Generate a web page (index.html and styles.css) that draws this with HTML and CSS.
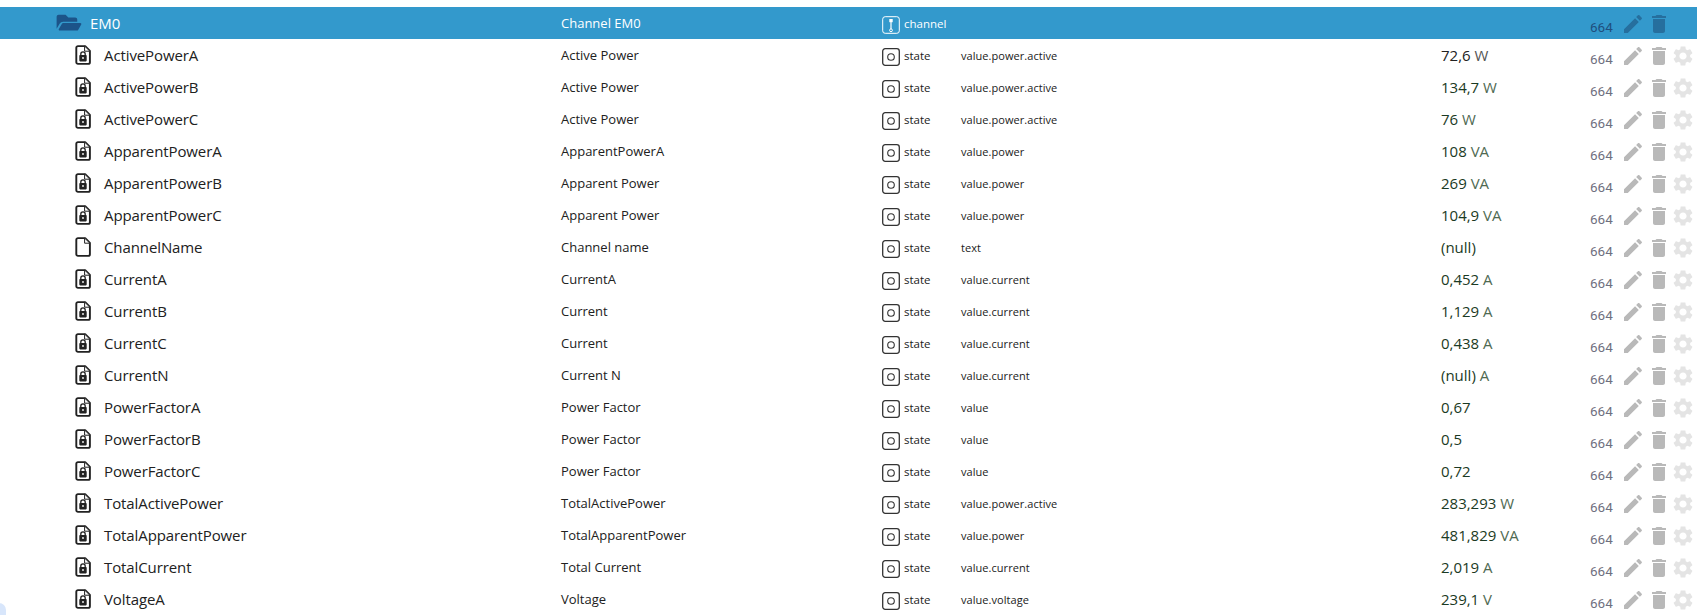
FILE: index.html
```html
<!DOCTYPE html>
<html lang="en">
<head>
  <meta charset="UTF-8">
  <title>Objects</title>
  <link rel="stylesheet" href="styles.css">
</head>
<body>

  <svg class="defs" width="0" height="0">
    <symbol id="i-folder" viewBox="0 0 576 512"><path d="M572.700 292.100L500.300 416.200C494.600 426 484.100 432 472.700 432H72c-18.500 0-30.100-20.100-20.700-36.100l72.400-124.100c5.700-9.800 16.200-15.800 27.600-15.800h400.700c18.500 0 30.100 20.100 20.700 36.100zM152 224h328v-48c0-26.500-21.500-48-48-48H272l-64-64H48C21.500 64 0 85.500 0 112v278l69.100-118.400C86.200 242.300 118 224 152 224z"/></symbol>
    <symbol id="i-file" viewBox="0 0 16 20"><path d="M3 1.100h7.200L14.900 6v11.200a1.700 1.700 0 0 1-1.700 1.700H3a1.700 1.700 0 0 1-1.700-1.700V2.800A1.700 1.700 0 0 1 3 1.100z" fill="#fff" stroke="#222" stroke-width="1.900" stroke-linejoin="round"/><path d="M9.600 1.100v5.100h5.300z" fill="#fff" stroke="#222" stroke-width="1"/></symbol>
    <symbol id="i-lockfile" viewBox="0 0 16 20"><path d="M3 1.100h7.200L14.900 6v11.200a1.700 1.700 0 0 1-1.700 1.700H3a1.700 1.700 0 0 1-1.700-1.700V2.800A1.700 1.700 0 0 1 3 1.100z" fill="#fff" stroke="#222" stroke-width="1.900" stroke-linejoin="round"/><path d="M9.600 1.100v5.100h5.300z" fill="#fff" stroke="#222" stroke-width="1"/><rect x="4.300" y="10" width="7.400" height="6.400" rx=".8" fill="#222"/><path d="M5.800 10.500V9a2.200 2.200 0 0 1 4.400 0v1.500" fill="none" stroke="#222" stroke-width="1.300"/><circle cx="8" cy="13" r=".9" fill="#fff"/></symbol>
    <symbol id="i-state" viewBox="0 0 18 18"><rect x=".7" y=".7" width="16.600" height="16.600" rx="2.500" fill="none" stroke="currentColor" stroke-width="1.300"/><circle cx="9" cy="9" r="3.300" fill="none" stroke="currentColor" stroke-width="1.100"/></symbol>
    <symbol id="i-channel" viewBox="0 0 18 18"><rect x=".7" y=".7" width="16.600" height="16.600" rx="2.500" fill="none" stroke="currentColor" stroke-width="1"/><rect x="7.300" y="3" width="3.400" height="3.200" fill="currentColor"/><path d="M9 6v7" stroke="currentColor" stroke-width="1.200"/><circle cx="9" cy="14.300" r="1.400" fill="none" stroke="currentColor"/></symbol>
    <symbol id="i-edit" viewBox="0 0 24 24"><path d="M3 17.250V21h3.750L17.810 9.940l-3.750-3.750L3 17.250zM20.710 7.040c.39-.39.39-1.020 0-1.410l-2.340-2.340c-.39-.39-1.020-.39-1.410 0l-1.830 1.830 3.750 3.750 1.830-1.830z"/></symbol>
    <symbol id="i-trash" viewBox="0 0 24 24"><path d="M6 19c0 1.100.9 2 2 2h8c1.100 0 2-.9 2-2V7H6v12zM19 4h-3.500l-1-1h-5l-1 1H5v2h14V4z"/></symbol>
    <symbol id="i-gear" viewBox="0 0 24 24"><path d="M19.140 12.940c.04-.3.06-.61.06-.94 0-.32-.02-.64-.07-.94l2.030-1.580c.18-.14.23-.41.12-.61l-1.920-3.320c-.12-.22-.37-.29-.59-.22l-2.390.96c-.5-.38-1.030-.7-1.620-.94l-.36-2.540c-.04-.24-.24-.41-.48-.41h-3.840c-.24 0-.43.17-.47.41l-.36 2.540c-.59.24-1.130.57-1.620.94l-2.390-.96c-.22-.08-.47 0-.59.22L2.740 8.870c-.12.21-.08.47.12.61l2.030 1.580c-.05.3-.09.63-.09.94s.02.64.07.94l-2.030 1.580c-.18.14-.23.41-.12.61l1.920 3.320c.12.22.37.29.59.22l2.390-.96c.5.38 1.030.7 1.620.94l.36 2.540c.05.24.24.41.48.41h3.840c.24 0 .44-.17.47-.41l.36-2.540c.59-.24 1.130-.56 1.620-.94l2.390.96c.22.08.47 0 .59-.22l1.920-3.320c.12-.22.07-.47-.12-.61l-2.010-1.580zM12 15.600c-1.980 0-3.600-1.620-3.600-3.600s1.620-3.600 3.600-3.600 3.600 1.620 3.600 3.600-1.620 3.600-3.600 3.600z"/></symbol>
  </svg>

  <div class="tree">

    <div class="row row-cut">
      <span class="col-icon"></span><span class="col-name"></span><span class="col-title"></span>
      <span class="col-type"><svg class="type-icon"><use href="#i-state"/></svg></span>
      <span class="col-role"></span><span class="col-value"></span><span class="col-acl"></span>
      <span class="col-actions"><svg class="act act-edit"><use href="#i-edit"/></svg><svg class="act act-trash"><use href="#i-trash"/></svg><svg class="act act-gear"><use href="#i-gear"/></svg></span>
    </div>

    <div class="row row-channel">
      <span class="col-icon"><svg class="folder-icon"><use href="#i-folder"/></svg></span>
      <span class="col-name">EM0</span><span class="col-title">Channel EM0</span>
      <span class="col-type"><svg class="type-icon"><use href="#i-channel"/></svg>channel</span>
      <span class="col-role"></span><span class="col-value"></span><span class="col-acl">664</span>
      <span class="col-actions"><svg class="act act-edit"><use href="#i-edit"/></svg><svg class="act act-trash"><use href="#i-trash"/></svg></span>
    </div>

    <div class="row">
      <span class="col-icon"><svg class="file-icon"><use href="#i-lockfile"/></svg></span>
      <span class="col-name">ActivePowerA</span><span class="col-title">Active Power</span>
      <span class="col-type"><svg class="type-icon"><use href="#i-state"/></svg>state</span>
      <span class="col-role">value.power.active</span><span class="col-value old">72,6 <i>W</i></span><span class="col-acl">664</span>
      <span class="col-actions"><svg class="act act-edit"><use href="#i-edit"/></svg><svg class="act act-trash"><use href="#i-trash"/></svg><svg class="act act-gear"><use href="#i-gear"/></svg></span>
    </div>
    <div class="row">
      <span class="col-icon"><svg class="file-icon"><use href="#i-lockfile"/></svg></span>
      <span class="col-name">ActivePowerB</span><span class="col-title">Active Power</span>
      <span class="col-type"><svg class="type-icon"><use href="#i-state"/></svg>state</span>
      <span class="col-role">value.power.active</span><span class="col-value">134,7 <i>W</i></span><span class="col-acl">664</span>
      <span class="col-actions"><svg class="act act-edit"><use href="#i-edit"/></svg><svg class="act act-trash"><use href="#i-trash"/></svg><svg class="act act-gear"><use href="#i-gear"/></svg></span>
    </div>
    <div class="row">
      <span class="col-icon"><svg class="file-icon"><use href="#i-lockfile"/></svg></span>
      <span class="col-name">ActivePowerC</span><span class="col-title">Active Power</span>
      <span class="col-type"><svg class="type-icon"><use href="#i-state"/></svg>state</span>
      <span class="col-role">value.power.active</span><span class="col-value">76 <i>W</i></span><span class="col-acl">664</span>
      <span class="col-actions"><svg class="act act-edit"><use href="#i-edit"/></svg><svg class="act act-trash"><use href="#i-trash"/></svg><svg class="act act-gear"><use href="#i-gear"/></svg></span>
    </div>
    <div class="row">
      <span class="col-icon"><svg class="file-icon"><use href="#i-lockfile"/></svg></span>
      <span class="col-name">ApparentPowerA</span><span class="col-title">ApparentPowerA</span>
      <span class="col-type"><svg class="type-icon"><use href="#i-state"/></svg>state</span>
      <span class="col-role">value.power</span><span class="col-value">108 <i>VA</i></span><span class="col-acl">664</span>
      <span class="col-actions"><svg class="act act-edit"><use href="#i-edit"/></svg><svg class="act act-trash"><use href="#i-trash"/></svg><svg class="act act-gear"><use href="#i-gear"/></svg></span>
    </div>
    <div class="row">
      <span class="col-icon"><svg class="file-icon"><use href="#i-lockfile"/></svg></span>
      <span class="col-name">ApparentPowerB</span><span class="col-title">Apparent Power</span>
      <span class="col-type"><svg class="type-icon"><use href="#i-state"/></svg>state</span>
      <span class="col-role">value.power</span><span class="col-value">269 <i>VA</i></span><span class="col-acl">664</span>
      <span class="col-actions"><svg class="act act-edit"><use href="#i-edit"/></svg><svg class="act act-trash"><use href="#i-trash"/></svg><svg class="act act-gear"><use href="#i-gear"/></svg></span>
    </div>
    <div class="row">
      <span class="col-icon"><svg class="file-icon"><use href="#i-lockfile"/></svg></span>
      <span class="col-name">ApparentPowerC</span><span class="col-title">Apparent Power</span>
      <span class="col-type"><svg class="type-icon"><use href="#i-state"/></svg>state</span>
      <span class="col-role">value.power</span><span class="col-value">104,9 <i>VA</i></span><span class="col-acl">664</span>
      <span class="col-actions"><svg class="act act-edit"><use href="#i-edit"/></svg><svg class="act act-trash"><use href="#i-trash"/></svg><svg class="act act-gear"><use href="#i-gear"/></svg></span>
    </div>
    <div class="row">
      <span class="col-icon"><svg class="file-icon"><use href="#i-file"/></svg></span>
      <span class="col-name">ChannelName</span><span class="col-title">Channel name</span>
      <span class="col-type"><svg class="type-icon"><use href="#i-state"/></svg>state</span>
      <span class="col-role">text</span><span class="col-value">(null)</span><span class="col-acl">664</span>
      <span class="col-actions"><svg class="act act-edit"><use href="#i-edit"/></svg><svg class="act act-trash"><use href="#i-trash"/></svg><svg class="act act-gear"><use href="#i-gear"/></svg></span>
    </div>
    <div class="row">
      <span class="col-icon"><svg class="file-icon"><use href="#i-lockfile"/></svg></span>
      <span class="col-name">CurrentA</span><span class="col-title">CurrentA</span>
      <span class="col-type"><svg class="type-icon"><use href="#i-state"/></svg>state</span>
      <span class="col-role">value.current</span><span class="col-value">0,452 <i>A</i></span><span class="col-acl">664</span>
      <span class="col-actions"><svg class="act act-edit"><use href="#i-edit"/></svg><svg class="act act-trash"><use href="#i-trash"/></svg><svg class="act act-gear"><use href="#i-gear"/></svg></span>
    </div>
    <div class="row">
      <span class="col-icon"><svg class="file-icon"><use href="#i-lockfile"/></svg></span>
      <span class="col-name">CurrentB</span><span class="col-title">Current</span>
      <span class="col-type"><svg class="type-icon"><use href="#i-state"/></svg>state</span>
      <span class="col-role">value.current</span><span class="col-value">1,129 <i>A</i></span><span class="col-acl">664</span>
      <span class="col-actions"><svg class="act act-edit"><use href="#i-edit"/></svg><svg class="act act-trash"><use href="#i-trash"/></svg><svg class="act act-gear"><use href="#i-gear"/></svg></span>
    </div>
    <div class="row">
      <span class="col-icon"><svg class="file-icon"><use href="#i-lockfile"/></svg></span>
      <span class="col-name">CurrentC</span><span class="col-title">Current</span>
      <span class="col-type"><svg class="type-icon"><use href="#i-state"/></svg>state</span>
      <span class="col-role">value.current</span><span class="col-value">0,438 <i>A</i></span><span class="col-acl">664</span>
      <span class="col-actions"><svg class="act act-edit"><use href="#i-edit"/></svg><svg class="act act-trash"><use href="#i-trash"/></svg><svg class="act act-gear"><use href="#i-gear"/></svg></span>
    </div>
    <div class="row">
      <span class="col-icon"><svg class="file-icon"><use href="#i-lockfile"/></svg></span>
      <span class="col-name">CurrentN</span><span class="col-title">Current N</span>
      <span class="col-type"><svg class="type-icon"><use href="#i-state"/></svg>state</span>
      <span class="col-role">value.current</span><span class="col-value">(null) <i>A</i></span><span class="col-acl">664</span>
      <span class="col-actions"><svg class="act act-edit"><use href="#i-edit"/></svg><svg class="act act-trash"><use href="#i-trash"/></svg><svg class="act act-gear"><use href="#i-gear"/></svg></span>
    </div>
    <div class="row">
      <span class="col-icon"><svg class="file-icon"><use href="#i-lockfile"/></svg></span>
      <span class="col-name">PowerFactorA</span><span class="col-title">Power Factor</span>
      <span class="col-type"><svg class="type-icon"><use href="#i-state"/></svg>state</span>
      <span class="col-role">value</span><span class="col-value">0,67</span><span class="col-acl">664</span>
      <span class="col-actions"><svg class="act act-edit"><use href="#i-edit"/></svg><svg class="act act-trash"><use href="#i-trash"/></svg><svg class="act act-gear"><use href="#i-gear"/></svg></span>
    </div>
    <div class="row">
      <span class="col-icon"><svg class="file-icon"><use href="#i-lockfile"/></svg></span>
      <span class="col-name">PowerFactorB</span><span class="col-title">Power Factor</span>
      <span class="col-type"><svg class="type-icon"><use href="#i-state"/></svg>state</span>
      <span class="col-role">value</span><span class="col-value">0,5</span><span class="col-acl">664</span>
      <span class="col-actions"><svg class="act act-edit"><use href="#i-edit"/></svg><svg class="act act-trash"><use href="#i-trash"/></svg><svg class="act act-gear"><use href="#i-gear"/></svg></span>
    </div>
    <div class="row">
      <span class="col-icon"><svg class="file-icon"><use href="#i-lockfile"/></svg></span>
      <span class="col-name">PowerFactorC</span><span class="col-title">Power Factor</span>
      <span class="col-type"><svg class="type-icon"><use href="#i-state"/></svg>state</span>
      <span class="col-role">value</span><span class="col-value">0,72</span><span class="col-acl">664</span>
      <span class="col-actions"><svg class="act act-edit"><use href="#i-edit"/></svg><svg class="act act-trash"><use href="#i-trash"/></svg><svg class="act act-gear"><use href="#i-gear"/></svg></span>
    </div>
    <div class="row">
      <span class="col-icon"><svg class="file-icon"><use href="#i-lockfile"/></svg></span>
      <span class="col-name">TotalActivePower</span><span class="col-title">TotalActivePower</span>
      <span class="col-type"><svg class="type-icon"><use href="#i-state"/></svg>state</span>
      <span class="col-role">value.power.active</span><span class="col-value">283,293 <i>W</i></span><span class="col-acl">664</span>
      <span class="col-actions"><svg class="act act-edit"><use href="#i-edit"/></svg><svg class="act act-trash"><use href="#i-trash"/></svg><svg class="act act-gear"><use href="#i-gear"/></svg></span>
    </div>
    <div class="row">
      <span class="col-icon"><svg class="file-icon"><use href="#i-lockfile"/></svg></span>
      <span class="col-name">TotalApparentPower</span><span class="col-title">TotalApparentPower</span>
      <span class="col-type"><svg class="type-icon"><use href="#i-state"/></svg>state</span>
      <span class="col-role">value.power</span><span class="col-value">481,829 <i>VA</i></span><span class="col-acl">664</span>
      <span class="col-actions"><svg class="act act-edit"><use href="#i-edit"/></svg><svg class="act act-trash"><use href="#i-trash"/></svg><svg class="act act-gear"><use href="#i-gear"/></svg></span>
    </div>
    <div class="row">
      <span class="col-icon"><svg class="file-icon"><use href="#i-lockfile"/></svg></span>
      <span class="col-name">TotalCurrent</span><span class="col-title">Total Current</span>
      <span class="col-type"><svg class="type-icon"><use href="#i-state"/></svg>state</span>
      <span class="col-role">value.current</span><span class="col-value">2,019 <i>A</i></span><span class="col-acl">664</span>
      <span class="col-actions"><svg class="act act-edit"><use href="#i-edit"/></svg><svg class="act act-trash"><use href="#i-trash"/></svg><svg class="act act-gear"><use href="#i-gear"/></svg></span>
    </div>
    <div class="row">
      <span class="col-icon"><svg class="file-icon"><use href="#i-lockfile"/></svg></span>
      <span class="col-name">VoltageA</span><span class="col-title">Voltage</span>
      <span class="col-type"><svg class="type-icon"><use href="#i-state"/></svg>state</span>
      <span class="col-role">value.voltage</span><span class="col-value">239,1 <i>V</i></span><span class="col-acl">664</span>
      <span class="col-actions"><svg class="act act-edit"><use href="#i-edit"/></svg><svg class="act act-trash"><use href="#i-trash"/></svg><svg class="act act-gear"><use href="#i-gear"/></svg></span>
    </div>

  </div>

  <div class="corner-fab"></div>

</body>
</html>
```

FILE: styles.css
```css
html, body {
  height: 100%;
}
body {
  margin: 0;
  background-color: #FFFFFF;
  color: #212121;
  font-family: "Open Sans", "Liberation Sans", sans-serif;
  overflow: hidden;
}
.defs {
  position: absolute;
}
.row {
  display: grid;
  grid-template-columns: 104px 457px 321px 79px 480px 149px 31px 1fr;
  align-items: center;
  height: 32px;
  font-size: 12px;
  white-space: nowrap;
}
.row-cut {
  height: 7px;
  overflow: hidden;
  align-items: end;
}
.row-cut .col-type,
.row-cut .col-actions {
  height: 32px;
  align-self: end;
}
.row-channel {
  background-color: #3399CC;
  color: #FFFFFF;
}
.col-icon {
  display: flex;
  align-items: center;
  padding-left: 75px;
}
.row-channel .col-icon {
  padding-left: 56px;
}
.col-name {
  font-size: 15px;
  letter-spacing: -0.1px;
}
.row-channel .col-name {
  margin-left: -14px;
}
.col-title {
  font-size: 13px;
}
.col-type {
  display: flex;
  align-items: center;
  gap: 4px;
  font-size: 11.5px;
}
.col-role {
  font-size: 11px;
  letter-spacing: 0.05px;
}
.col-value {
  font-size: 15px;
  color: #1B3A24;
}
.col-value i {
  font-style: normal;
  color: #4F6A52;
}
.col-value.old {
  color: #222222;
}
.col-value.old i {
  color: #555555;
}
.col-acl {
  padding-top: 8px;
  font-family: "Roboto", "Liberation Sans", sans-serif;
  font-size: 13.5px;
  color: #707080;
}
.row-channel .col-acl {
  color: #1F4F7E;
}
.col-actions {
  display: flex;
  align-items: center;
  gap: 0;
  margin-top: 2px;
}
.file-icon {
  width: 16px;
  height: 20px;
}
.folder-icon {
  width: 26px;
  height: 22px;
  fill: #1C5489;
}
.type-icon {
  width: 18px;
  height: 18px;
  margin-top: 4px;
  color: #333333;
}
.row-channel .type-icon {
  color: #FFFFFF;
}
.act {
  width: 24px;
  height: 24px;
  flex: none;
}
.act-edit {
  margin-right: 2px;
}
.act-edit,
.act-trash {
  fill: #B9B9B9;
}
.act-gear {
  fill: #E4E4E4;
}
.row-channel .act-edit,
.row-channel .act-trash {
  fill: #266F9E;
}
.corner-fab {
  position: fixed;
  left: -8px;
  bottom: -8px;
  width: 14px;
  height: 20px;
  border-radius: 7px;
  background-color: #D8E6FB;
}
```
